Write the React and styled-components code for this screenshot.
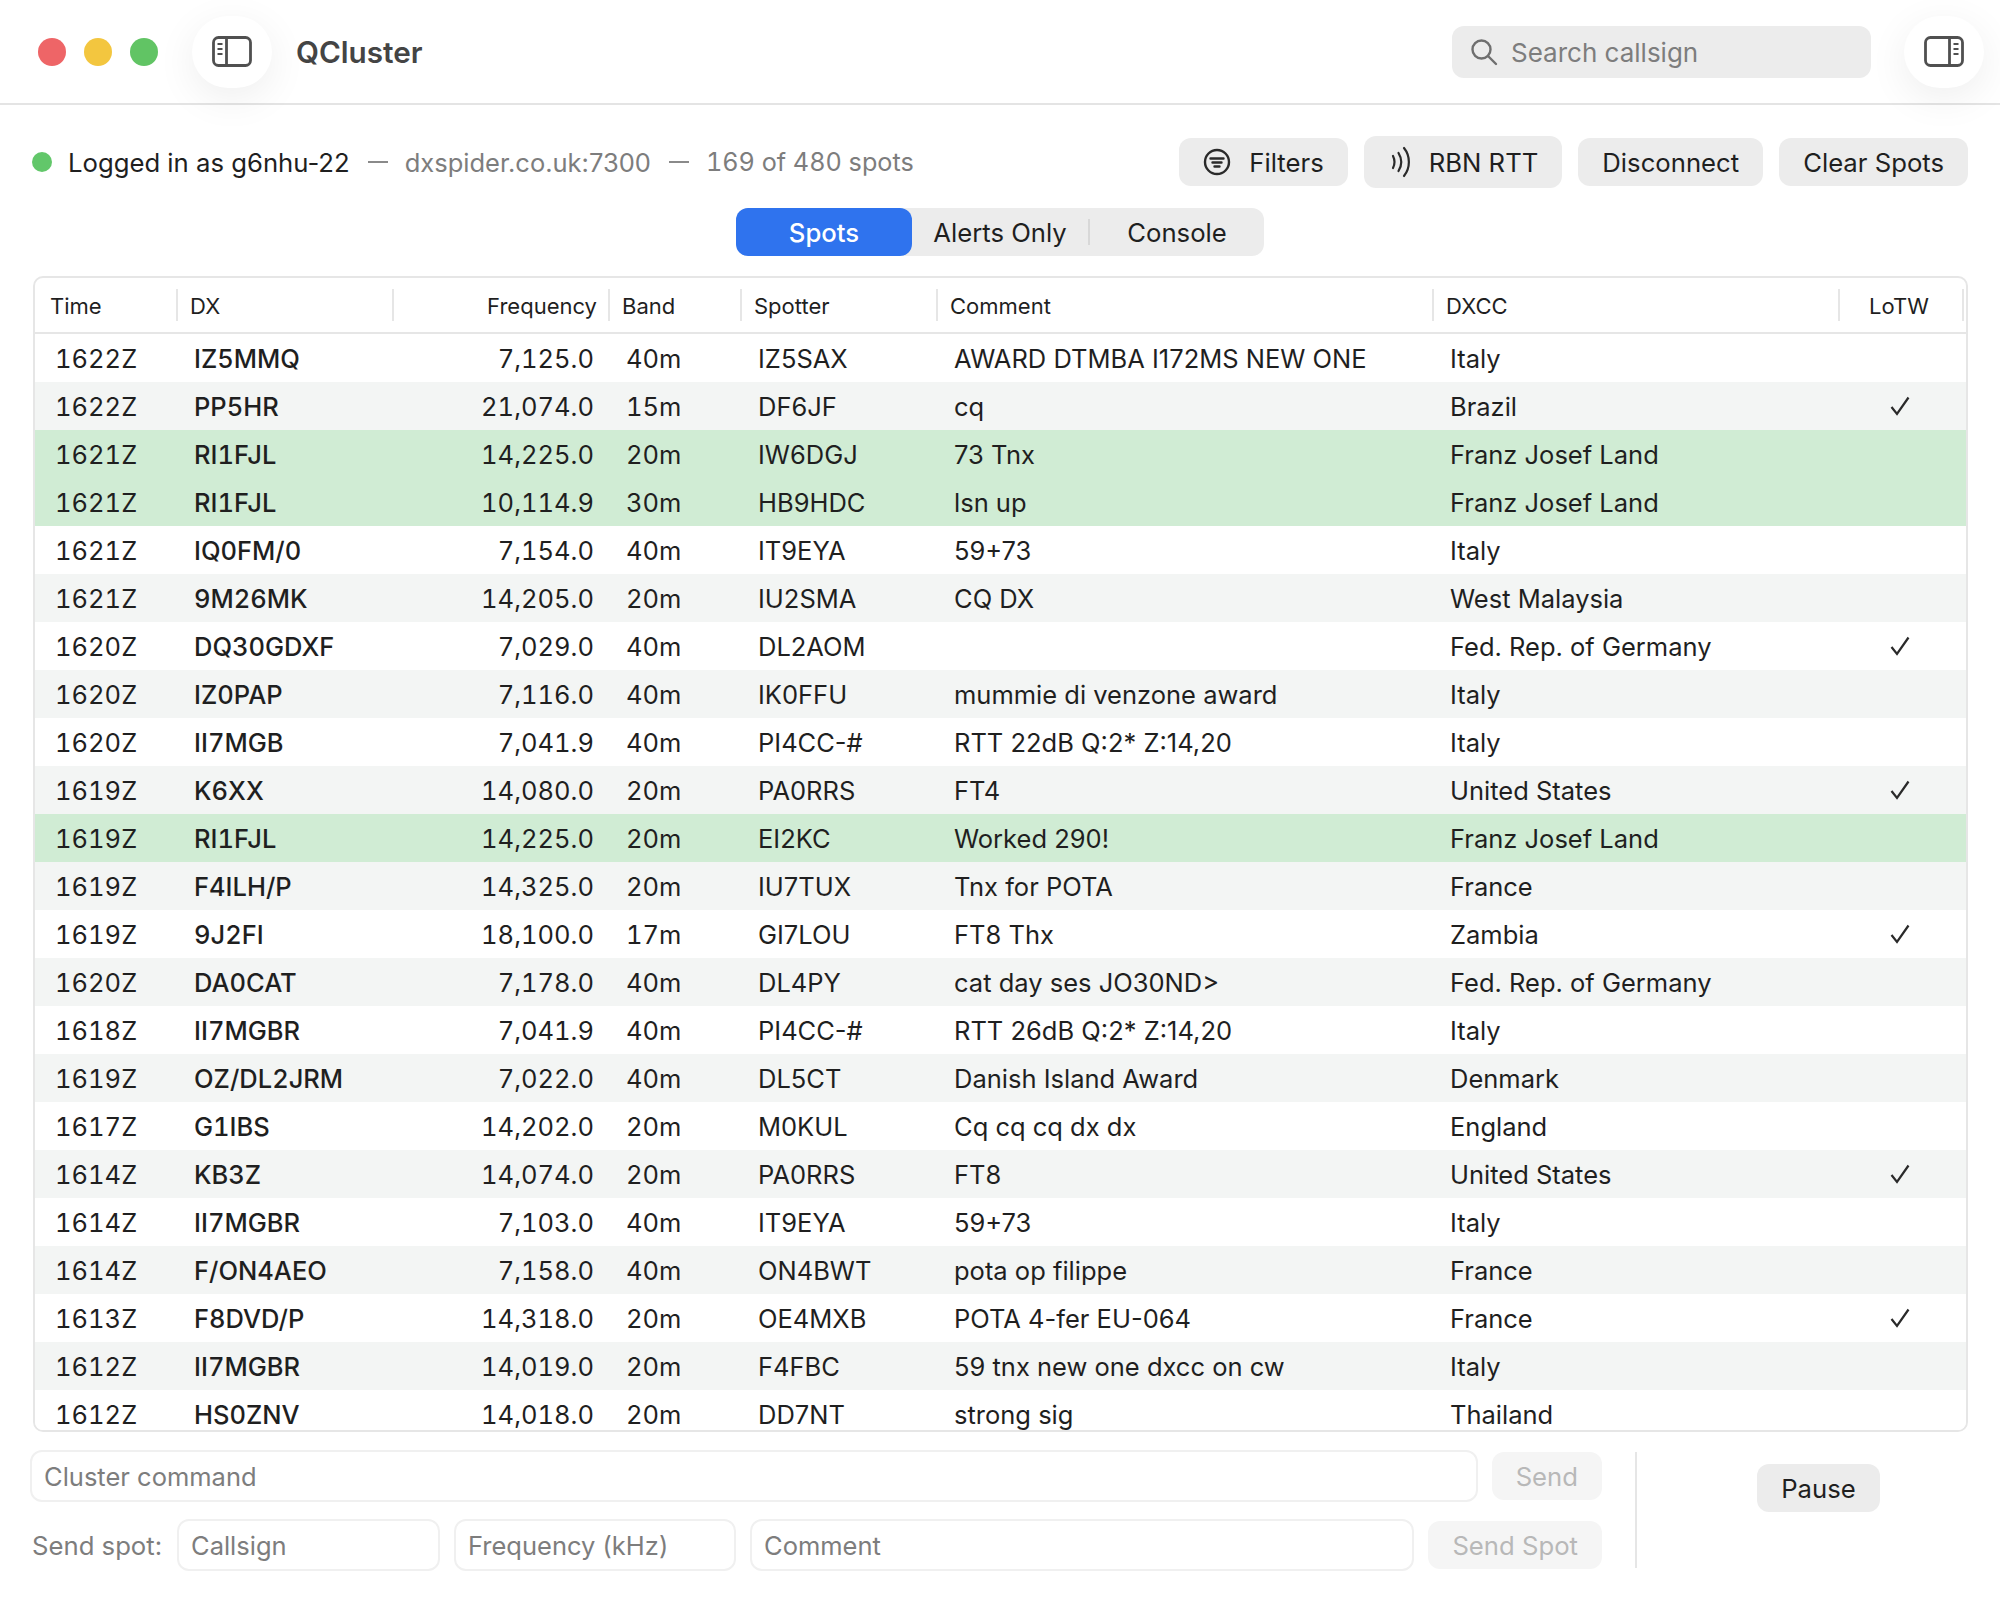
import React from 'react';
import styled, { createGlobalStyle } from 'styled-components';

const GlobalStyle = createGlobalStyle`
  html, body {
    margin: 0;
    padding: 0;
    background: #ffffff;
  }
  body {
    font-family: Inter, "Liberation Sans", sans-serif;
    color: #1f1f1f;
  }
`;

const COLUMNS = '143px 216px 216px 132px 196px 496px 406px 1fr';

const Window = styled.div`
  width: 2000px;
  height: 1600px;
  overflow: hidden;
  display: flex;
  flex-direction: column;
`;

// title bar
const TitleBar = styled.header`
  height: 103px;
  border-bottom: 2px solid #e4e4e4;
  display: flex;
  align-items: center;
  padding: 0 16px 0 38px;
  flex-shrink: 0;
`;

const TrafficLights = styled.div`
  display: flex;
  gap: 18px;
  margin-right: 34px;
`;

const Light = styled.span`
  width: 28px;
  height: 28px;
  border-radius: 50%;
  background: ${(p) => p.$color};
`;

const RoundButton = styled.button`
  width: 80px;
  height: 72px;
  border: 0;
  padding: 0;
  border-radius: 36px;
  background: #ffffff;
  box-shadow: 0 10px 40px rgba(0, 0, 0, 0.07);
  display: flex;
  align-items: center;
  justify-content: center;
`;

const AppName = styled.div`
  margin-left: 24px;
  font-size: 29.7px;
  font-weight: 600;
  color: #444444;
  flex: 1;
`;

const SearchBox = styled.div`
  width: 419px;
  height: 52px;
  box-sizing: border-box;
  border-radius: 12px;
  background: #ececec;
  padding: 1px 0 0 18px;
  display: flex;
  align-items: center;
  gap: 13px;
  margin-right: 33px;
  font-size: 26px;
  color: #7d7d7d;
`;

// status row
const StatusRow = styled.div`
  display: flex;
  align-items: center;
  padding: 31px 32px 0 32px;
  height: 52px;
  flex-shrink: 0;
`;

const StatusDot = styled.span`
  width: 20px;
  height: 20px;
  border-radius: 50%;
  background: #62c76a;
  margin-right: 16px;
`;

const StatusText = styled.span`
  font-size: ${(p) => (p.$muted ? '25.5px' : '25.7px')};
  color: ${(p) => (p.$muted ? '#7d7d7d' : '#1f1f1f')};
  white-space: nowrap;
`;

const SpotCount = styled(StatusText)`
  font-size: 25.2px;
  font-variant-numeric: tabular-nums;
`;

const Dash = styled.span`
  width: 20px;
  height: 2px;
  background: #8a8a8a;
  margin: 0 17px 0 18px;
`;

const Actions = styled.div`
  margin-left: auto;
  display: flex;
  align-items: center;
  gap: 16px;
`;

const Button = styled.button`
  height: ${(p) => (p.$tall ? '52px' : '48px')};
  padding: 0 24px 0 ${(p) => (p.$tall ? '27px' : '24px')};
  border: 0;
  border-radius: 12px;
  background: ${(p) => (p.disabled ? '#f5f5f5' : '#ececec')};
  color: ${(p) => (p.disabled ? '#b8b8b8' : '#1f1f1f')};
  font-family: inherit;
  font-size: 25.7px;
  display: flex;
  align-items: center;
  gap: 18px;
  white-space: nowrap;
`;

// segmented control
const TabsRow = styled.div`
  display: flex;
  justify-content: center;
  margin-top: 20px;
  flex-shrink: 0;
`;

const Tabs = styled.div`
  display: flex;
  align-items: center;
  height: 48px;
  width: 528px;
  border-radius: 12px;
  background: #ececec;
`;

const Tab = styled.div`
  height: 48px;
  width: ${(p) => p.$width}px;
  display: flex;
  align-items: center;
  justify-content: center;
  font-size: 25.7px;
  border-radius: 12px;
  color: ${(p) => (p.$active ? '#ffffff' : '#1f1f1f')};
  background: ${(p) => (p.$active ? '#2f73ee' : 'transparent')};
  font-weight: ${(p) => (p.$active ? 500 : 400)};
`;

const TabDivider = styled.span`
  width: 2px;
  height: 26px;
  background: #d8d8d8;
`;

// spots table
const TableFrame = styled.div`
  margin: 20px 32px 0 33px;
  height: 1156px;
  box-sizing: border-box;
  border: 2px solid #e6e6e6;
  border-radius: 10px;
  overflow: hidden;
  flex-shrink: 0;
`;

const HeaderRow = styled.div`
  display: grid;
  grid-template-columns: ${COLUMNS};
  height: 54px;
  align-items: center;
  border-bottom: 2px solid #e6e6e6;
`;

const HeaderCell = styled.div`
  height: 32px;
  display: flex;
  align-items: center;
  justify-content: ${(p) => (p.$align === 'right' ? 'flex-end' : p.$align === 'center' ? 'center' : 'flex-start')};
  padding: 2px ${(p) => (p.$align === 'right' ? '11px' : '12px')} 0;
  font-size: 22px;
  color: #1f1f1f;
  border-right: 2px solid #e6e6e6;
  box-sizing: border-box;

  &:first-child {
    padding-left: 15px;
  }

  &:last-child {
    padding: 2px 4px 0 0;
    margin-right: 2px;
  }
`;

const Row = styled.div`
  display: grid;
  grid-template-columns: ${COLUMNS};
  height: 48px;
  align-items: center;
  background: ${(p) => (p.$alert ? '#d0ecd4' : p.$odd ? '#f3f5f4' : '#ffffff')};
`;

const Cell = styled.div`
  font-size: 25.5px;
  font-weight: ${(p) => (p.$bold ? 500 : 400)};
  font-variant-numeric: ${(p) => (p.$plain ? 'normal' : 'tabular-nums')};
  text-align: ${(p) => p.$align || 'left'};
  padding: 0 16px;
  white-space: nowrap;
  overflow: hidden;
  color: #1f1f1f;

  &:first-child {
    padding-left: 20px;
  }
`;

const CheckCell = styled.div`
  display: flex;
  justify-content: center;
  padding-right: 6px;
`;

// command area
const Footer = styled.div`
  display: flex;
  padding: 18px 32px 0 30px;
`;

const Forms = styled.div`
  width: 1572px;
  display: flex;
  flex-direction: column;
  gap: 17px;
`;

const FormRow = styled.div`
  display: flex;
  align-items: center;
  gap: 14px;
`;

const Input = styled.input`
  box-sizing: border-box;
  height: 52px;
  width: ${(p) => (p.$width ? `${p.$width}px` : 'auto')};
  flex: ${(p) => (p.$width ? 'none' : 1)};
  min-width: 0;
  border: 2px solid #f0f0f0;
  border-radius: 12px;
  padding: 0 12px;
  font-family: inherit;
  font-size: 25.5px;
  background: #ffffff;
  &::placeholder {
    color: #7d7d7d;
    opacity: 1;
  }
`;

const SpotLabel = styled.span`
  font-size: 25.7px;
  color: #7d7d7d;
  width: 131px;
  margin-left: 2px;
  white-space: nowrap;
`;

const PauseArea = styled.div`
  margin: 2px 0 0 33px;
  border-left: 2px solid #e6e6e6;
  flex: 1;
  height: 116px;
  display: flex;
  justify-content: center;
  padding: 12px 0 0 32px;
  box-sizing: border-box;
`;

const SidebarIcon = ({ flip }) => (
  <svg width="40" height="31" viewBox="0 0 40 31" fill="none" stroke="#505050" strokeWidth="2.8">
    <g transform={flip ? 'matrix(-1 0 0 1 40 0)' : undefined}>
      <rect x="1.5" y="1.5" width="37" height="28" rx="5" />
      <path d="M14.500 1.500v28" />
      <path d="M5.500 8h5M5.500 13h5M5.500 18h5" strokeWidth="2.200" />
    </g>
  </svg>
);

const SearchIcon = () => (
  <svg width="28" height="28" viewBox="0 0 28 28" fill="none" stroke="#6f6f6f" strokeWidth="2.4" strokeLinecap="round">
    <circle cx="11.5" cy="11.5" r="9" />
    <path d="M18 18l8 8" />
  </svg>
);

const FilterIcon = () => (
  <svg width="28" height="28" viewBox="0 0 28 28" fill="none" stroke="#2a2a2a" strokeWidth="2.4" strokeLinecap="round">
    <circle cx="14" cy="14" r="12" />
    <path d="M7.500 10.500h13M9.500 14.500h9M11.500 18.500h5" />
  </svg>
);

const SignalIcon = () => (
  <svg width="20" height="32" viewBox="0 0 20 32" fill="none" stroke="#2a2a2a" strokeWidth="2.200" strokeLinecap="round">
    <path d="M2 10c1.800 3.600 1.800 8.400 0 12" />
    <path d="M7.500 7c3.400 5.500 3.400 12.500 0 18" />
    <path d="M13 2c6.500 8 6.500 20 0 28" />
  </svg>
);

const CheckIcon = () => (
  <svg width="20" height="20" viewBox="0 0 20 20" fill="none" stroke="#2a2a2a" strokeWidth="2.200">
    <path d="M1.500 11l5.500 7L18.500 1.500" />
  </svg>
);

const SPOTS = [
  ['1622Z', 'IZ5MMQ', '7,125.0', '40m', 'IZ5SAX', 'AWARD DTMBA I172MS NEW ONE', 'Italy', false, false],
  ['1622Z', 'PP5HR', '21,074.0', '15m', 'DF6JF', 'cq', 'Brazil', true, false],
  ['1621Z', 'RI1FJL', '14,225.0', '20m', 'IW6DGJ', '73 Tnx', 'Franz Josef Land', false, true],
  ['1621Z', 'RI1FJL', '10,114.9', '30m', 'HB9HDC', 'lsn up', 'Franz Josef Land', false, true],
  ['1621Z', 'IQ0FM/0', '7,154.0', '40m', 'IT9EYA', '59+73', 'Italy', false, false],
  ['1621Z', '9M26MK', '14,205.0', '20m', 'IU2SMA', 'CQ DX', 'West Malaysia', false, false],
  ['1620Z', 'DQ30GDXF', '7,029.0', '40m', 'DL2AOM', '', 'Fed. Rep. of Germany', true, false],
  ['1620Z', 'IZ0PAP', '7,116.0', '40m', 'IK0FFU', 'mummie di venzone award', 'Italy', false, false],
  ['1620Z', 'II7MGB', '7,041.9', '40m', 'PI4CC-#', 'RTT 22dB Q:2* Z:14,20', 'Italy', false, false],
  ['1619Z', 'K6XX', '14,080.0', '20m', 'PA0RRS', 'FT4', 'United States', true, false],
  ['1619Z', 'RI1FJL', '14,225.0', '20m', 'EI2KC', 'Worked 290!', 'Franz Josef Land', false, true],
  ['1619Z', 'F4ILH/P', '14,325.0', '20m', 'IU7TUX', 'Tnx for POTA', 'France', false, false],
  ['1619Z', '9J2FI', '18,100.0', '17m', 'GI7LOU', 'FT8 Thx', 'Zambia', true, false],
  ['1620Z', 'DA0CAT', '7,178.0', '40m', 'DL4PY', 'cat day ses JO30ND>', 'Fed. Rep. of Germany', false, false],
  ['1618Z', 'II7MGBR', '7,041.9', '40m', 'PI4CC-#', 'RTT 26dB Q:2* Z:14,20', 'Italy', false, false],
  ['1619Z', 'OZ/DL2JRM', '7,022.0', '40m', 'DL5CT', 'Danish Island Award', 'Denmark', false, false],
  ['1617Z', 'G1IBS', '14,202.0', '20m', 'M0KUL', 'Cq cq cq dx dx', 'England', false, false],
  ['1614Z', 'KB3Z', '14,074.0', '20m', 'PA0RRS', 'FT8', 'United States', true, false],
  ['1614Z', 'II7MGBR', '7,103.0', '40m', 'IT9EYA', '59+73', 'Italy', false, false],
  ['1614Z', 'F/ON4AEO', '7,158.0', '40m', 'ON4BWT', 'pota op filippe', 'France', false, false],
  ['1613Z', 'F8DVD/P', '14,318.0', '20m', 'OE4MXB', 'POTA 4-fer EU-064', 'France', true, false],
  ['1612Z', 'II7MGBR', '14,019.0', '20m', 'F4FBC', '59 tnx new one dxcc on cw', 'Italy', false, false],
  ['1612Z', 'HS0ZNV', '14,018.0', '20m', 'DD7NT', 'strong sig', 'Thailand', false, false],
];

const App = () => {
  return (
    <Window>
      <GlobalStyle />
      <TitleBar>
        <TrafficLights>
          <Light $color="#ee6567" />
          <Light $color="#f3c63f" />
          <Light $color="#61c464" />
        </TrafficLights>
        <RoundButton>
          <SidebarIcon />
        </RoundButton>
        <AppName>QCluster</AppName>
        <SearchBox>
          <SearchIcon />
          Search callsign
        </SearchBox>
        <RoundButton>
          <SidebarIcon flip />
        </RoundButton>
      </TitleBar>

      <StatusRow>
        <StatusDot />
        <StatusText>Logged in as g6nhu-22</StatusText>
        <Dash />
        <StatusText $muted>dxspider.co.uk:7300</StatusText>
        <Dash />
        <SpotCount $muted>169 of 480 spots</SpotCount>
        <Actions>
          <Button>
            <FilterIcon />
            Filters
          </Button>
          <Button $tall>
            <SignalIcon />
            RBN RTT
          </Button>
          <Button>Disconnect</Button>
          <Button>Clear Spots</Button>
        </Actions>
      </StatusRow>

      <TabsRow>
        <Tabs>
          <Tab $active $width={176}>Spots</Tab>
          <Tab $width={176}>Alerts Only</Tab>
          <TabDivider />
          <Tab $width={174}>Console</Tab>
        </Tabs>
      </TabsRow>

      <TableFrame>
        <HeaderRow>
          <HeaderCell>Time</HeaderCell>
          <HeaderCell>DX</HeaderCell>
          <HeaderCell $align="right">Frequency</HeaderCell>
          <HeaderCell>Band</HeaderCell>
          <HeaderCell>Spotter</HeaderCell>
          <HeaderCell>Comment</HeaderCell>
          <HeaderCell>DXCC</HeaderCell>
          <HeaderCell $align="center">LoTW</HeaderCell>
        </HeaderRow>
        {SPOTS.map((spot, i) => (
          <Row key={i} $odd={i % 2 === 1} $alert={spot[8]}>
            <Cell>{spot[0]}</Cell>
            <Cell $bold>{spot[1]}</Cell>
            <Cell $align="right">{spot[2]}</Cell>
            <Cell>{spot[3]}</Cell>
            <Cell $plain>{spot[4]}</Cell>
            <Cell $plain>{spot[5]}</Cell>
            <Cell $plain>{spot[6]}</Cell>
            <CheckCell>{spot[7] ? <CheckIcon /> : null}</CheckCell>
          </Row>
        ))}
      </TableFrame>

      <Footer>
        <Forms>
          <FormRow>
            <Input placeholder="Cluster command" />
            <Button disabled>Send</Button>
          </FormRow>
          <FormRow>
            <SpotLabel>Send spot:</SpotLabel>
            <Input $width={263} placeholder="Callsign" />
            <Input $width={282} placeholder="Frequency (kHz)" />
            <Input placeholder="Comment" />
            <Button disabled>Send Spot</Button>
          </FormRow>
        </Forms>
        <PauseArea>
          <Button>Pause</Button>
        </PauseArea>
      </Footer>
    </Window>
  );
};

export default App;
